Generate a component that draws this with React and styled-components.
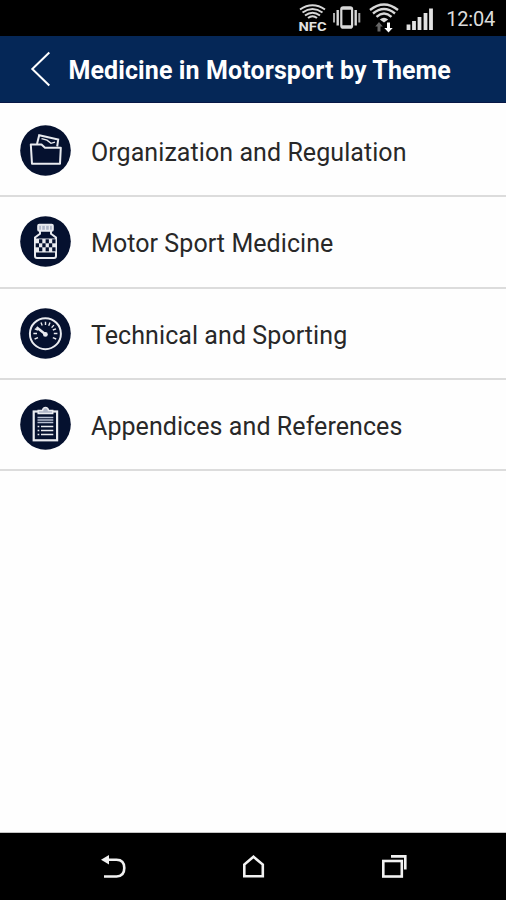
import React from "react";
import styled, { createGlobalStyle } from "styled-components";

const GlobalStyle = createGlobalStyle`
  * { box-sizing: border-box; }
  body { margin: 0; background: #fff; font-family: Roboto, "Liberation Sans", sans-serif; }
`;

const Screen = styled.div`
  display: flex;
  flex-direction: column;
  width: 506px;
  height: 900px;
  overflow: hidden;
  background: #fefefe;
`;

const StatusBar = styled.div`
  display: flex;
  flex: 0 0 36px;
  justify-content: flex-end;
  align-items: center;
  padding-right: 11px;
  background: #000;
`;

const StatusIcons = styled.svg`
  display: block;
  width: 140px;
  height: 36px;
  margin-right: 10px;
`;

const Clock = styled.span`
  color: #dcdcdc;
  font-size: 20px;
  line-height: 24px;
  letter-spacing: -0.2px;
  white-space: nowrap;
  padding-top: 2px;
`;

const Header = styled.header`
  display: flex;
  flex: 0 0 67px;
  align-items: center;
  padding-left: 29px;
  gap: 17.5px;
  background: #052757;
  border-bottom: 1px solid #071746;
`;

const BackIcon = styled.svg`
  display: block;
  width: 22px;
  height: 36px;
`;

const Title = styled.h1`
  margin: 0;
  padding-top: 4px;
  color: #fff;
  font-size: 25px;
  font-weight: 700;
  line-height: 30px;
  letter-spacing: 0.1px;
  white-space: nowrap;
`;

const ThemeList = styled.ul`
  flex: 1;
  margin: 0;
  padding: 3px 0 0;
  list-style: none;
  border-bottom: 1px solid #c4c4c4;
`;

const ThemeRow = styled.li`
  display: flex;
  align-items: center;
  height: 91.33px;
  padding-left: 20px;
  gap: 20px;
  border-bottom: 2px solid #dcdcdc;
`;

const Badge = styled.svg`
  display: block;
  flex: none;
  width: 51px;
  height: 51px;
  fill: none;
  stroke: #e9ebf0;
  stroke-width: 1.8;
`;

const Label = styled.span`
  color: #282828;
  font-size: 25px;
  line-height: 30px;
  letter-spacing: 0.07px;
  white-space: nowrap;
  padding-top: 5px;
`;

const NavBar = styled.nav`
  display: flex;
  flex: 0 0 67px;
  align-items: center;
  justify-content: space-between;
  padding: 0 97px 0 99px;
  background: #000;
`;

const NavIcon = styled.svg`
  display: block;
  width: 30px;
  height: 30px;
  fill: none;
  stroke: #f2f2f2;
  stroke-width: 2.6;
`;

const Disc = () => <circle cx="25.5" cy="25.5" r="25.3" fill="#05112f" stroke="none" />;

const FolderBadge = () => (
  <Badge viewBox="0 0 51 51">
    <Disc />
    <path d="M17 19 19.2 10.2 38.2 14.6 37.2 21.5" strokeWidth="2" />
    <path d="M21.5 13.6 27 15.2 31 18.3 35 17.2" strokeWidth="1.4" />
    <path d="M10.8 19.5H21.5L25 22.7H40.8L40 38.7H12Z" strokeWidth="2" strokeLinejoin="round" />
  </Badge>
);

const checks = [
  [19, 23.3], [25.6, 23.3], [15.7, 27.3], [22.3, 27.3], [28.9, 27.3],
  [19, 31.3], [25.6, 31.3], [32.2, 23.3], [32.2, 31.3],
];

const BottleBadge = () => (
  <Badge viewBox="0 0 51 51">
    <Disc />
    <rect x="18.2" y="8.8" width="14.6" height="6" rx="1" fill="#aeb5c7" strokeWidth="2" />
    <path d="M21.6 9.5V14M25.5 9.5V14M29.4 9.5V14" strokeWidth="1.3" />
    <path d="M20 15V17.8L15 21.5V40Q15 42 17 42H34Q36 42 36 40V21.5L31 17.8V15" strokeWidth="2" />
    <rect x="15.8" y="22.5" width="19.4" height="14" fill="#e9ebf0" stroke="none" />
    {checks.map(([x, y]) => (
      <rect key={`${x}-${y}`} x={x} y={y} width="3.3" height="4" fill="#05112f" stroke="none" />
    ))}
  </Badge>
);

const GaugeBadge = () => (
  <Badge viewBox="0 0 51 51">
    <Disc />
    <circle cx="25.4" cy="25.7" r="15.5" strokeWidth="2" />
    <path d="M13.4 25.5H17M33.8 25.5H37.4M14.6 31 18 29.6M36.2 31 32.8 29.6M14.8 20.8 18 22M36 20.8 32.8 22M21 14.6 22.2 17.6M25.5 13.8V17M30 14.6 28.7 17.8M33.9 17.1 31.6 19.6" strokeWidth="1.4" />
    <path d="M16.5 19.2 26 26.8" strokeWidth="2.4" />
    <circle cx="25.4" cy="26.4" r="2.4" fill="#e9ebf0" stroke="none" />
  </Badge>
);

const ClipboardBadge = () => (
  <Badge viewBox="0 0 51 51">
    <Disc />
    <rect x="13.7" y="12.5" width="23.4" height="28.8" strokeWidth="2.2" />
    <path d="M18.2 14.5V11.5H22.5Q23 8.5 25.5 8.5T28.5 11.5H32.7V14.5Z" fill="#aeb5c7" strokeWidth="1.5" />
    <path d="M17.5 18.5H33.3M17.5 21H33.3M17.5 23.5H33.3" stroke="#b7bfd2" strokeWidth="1.5" />
    <path d="M17.6 27.5H19.3M21 27.5H33.3M17.6 31.5H19.3M21 31.5H33.3M17.6 35.5H19.3M21 35.5H33.3" strokeWidth="1.5" />
  </Badge>
);

const themes = [
  { label: "Organization and Regulation", Icon: FolderBadge },
  { label: "Motor Sport Medicine", Icon: BottleBadge },
  { label: "Technical and Sporting", Icon: GaugeBadge },
  { label: "Appendices and References", Icon: ClipboardBadge },
];

const NfcText = styled.text`
  font: 700 12.5px Roboto, sans-serif;
  fill: #e2e2e2;
  stroke: none;
`;

const StatusGlyphs = () => (
  <StatusIcons viewBox="296 0 140 36" fill="none" stroke="#d8d8d8">
    <path d="M300 9.5Q312.5 1 325 9.5M302.5 12.5Q312.5 5.5 322.5 12.5M305 15.5Q312.5 10 320 15.5M308 18Q312.5 14.5 317 18" strokeWidth="2" />
    <NfcText x="298.5" y="31" textLength="28" lengthAdjust="spacingAndGlyphs">NFC</NfcText>
    <rect x="341.3" y="7.3" width="10.8" height="20.4" rx="2" strokeWidth="2.2" />
    <path d="M342 8.5H351.5M342 26.5H351.5" strokeWidth="2.5" />
    <path d="M337.7 10V25.5M355.7 10V25.5" strokeWidth="2.4" />
    <path d="M334 13V22.5M359.3 13V22.5" stroke="#aaa" strokeWidth="2" />
    <path d="M370 10Q384 -1 398 10M373 13.5Q384 4.5 395 13.5M376.5 16.8Q384 10.3 391.5 16.8" strokeWidth="2.4" />
    <path d="M379.8 19.5Q384 16 388.2 19.5L384 22.5Z" fill="#d8d8d8" stroke="none" />
    <path d="M379 22 382.8 26.5H380.5V31.5H377.5V26.5H375.2Z" fill="#666" stroke="none" />
    <path d="M388.5 32.5 392.7 28H390V22.5H387V28H384.3Z" fill="#fff" stroke="none" />
    <path d="M408.5 30V24.5M414 30V21M419.5 30V17M425.5 30V13M431 30V8.5" stroke="#e2e2e2" strokeWidth="3.8" />
  </StatusIcons>
);

export default function App() {
  return (
    <>
      <GlobalStyle />
      <Screen>
        <StatusBar>
          <StatusGlyphs />
          <Clock>12:04</Clock>
        </StatusBar>
        <Header>
          <BackIcon viewBox="29 52 22 36" fill="none" stroke="#fff" strokeWidth="2">
            <path d="M49.3 53.5 32.3 70 49.3 86.5" />
          </BackIcon>
          <Title>Medicine in Motorsport by Theme</Title>
        </Header>
        <ThemeList>
          {themes.map(({ label, Icon }) => (
            <ThemeRow key={label}>
              <Icon />
              <Label>{label}</Label>
            </ThemeRow>
          ))}
        </ThemeList>
        <NavBar>
          <NavIcon viewBox="99 852 30 30">
            <path d="M108 859.7H116.5Q124.3 859.7 124.3 868T116.5 876.5H104" />
            <path d="M101 859.7 109 855V864.5Z" fill="#f2f2f2" stroke="none" />
          </NavIcon>
          <NavIcon viewBox="239 852 30 30">
            <path d="M244.3 876.3V864.5L253.5 856.8 262.8 864.5V876.3Z" />
          </NavIcon>
          <NavIcon viewBox="379 852 30 30">
            <rect x="383.3" y="861" width="18.5" height="15.5" />
            <path d="M391 856.4H405.3V869.5" />
          </NavIcon>
        </NavBar>
      </Screen>
    </>
  );
}
